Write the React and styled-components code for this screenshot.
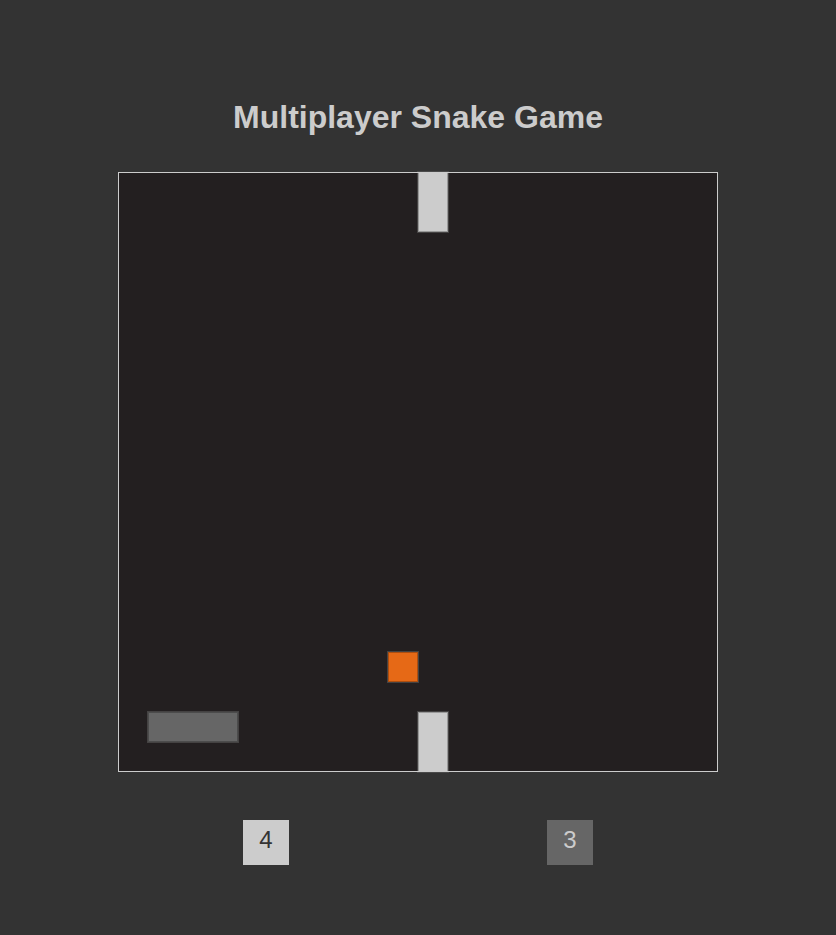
import React from "react";
import styled, { createGlobalStyle } from "styled-components";

const GlobalStyle = createGlobalStyle`
  body {
    margin: 0;
    background-color: #333333;
    font-family: "Liberation Sans", Arial, sans-serif;
  }
`;

const CELL = 30;

const Container = styled.div`
  display: flex;
  flex-direction: column;
  align-items: center;
  padding-top: 99px;
  min-height: 100vh;
  box-sizing: border-box;
`;

const Title = styled.h1`
  margin: 0 0 36px;
  font-size: 32px;
  line-height: 37px;
  font-weight: 700;
  color: #cccccc;
`;

const Board = styled.div`
  display: grid;
  grid-template-columns: repeat(20, ${CELL}px);
  grid-template-rows: repeat(20, ${CELL}px);
  width: 600px;
  height: 600px;
  background-color: #231f20;
  outline: 1px solid #cccccc;
  outline-offset: -1px;
`;

const Cell = styled.div`
  grid-column: ${({ x, w }) => `${x + 1} / span ${w || 1}`};
  grid-row: ${({ y, h }) => `${y + 1} / span ${h || 1}`};
  background-color: ${({ color }) => color};
  box-shadow: inset 0 0 0 1px rgba(0, 0, 0, 0.25),
    0 0 0 1px rgba(90, 90, 90, 0.6);
`;

const Scores = styled.div`
  display: flex;
  justify-content: center;
  gap: 258px;
  margin-top: 48px;
`;

const Score = styled.div`
  width: 46px;
  height: 45px;
  line-height: 40px;
  text-align: center;
  font-size: 24px;
  background-color: ${({ bg }) => bg};
  color: ${({ fg }) => fg};
`;

const snakes = [
  { x: 10, y: 0, h: 2, color: "#cccccc" },
  { x: 10, y: 18, h: 2, color: "#cccccc" },
  { x: 1, y: 18, w: 3, color: "#666666" },
];

const food = { x: 9, y: 16 };

const App = () => {
  return (
    <>
      <GlobalStyle />
      <Container>
        <Title>Multiplayer Snake Game</Title>
        <Board>
          {snakes.map((s, i) => (
            <Cell key={i} x={s.x} y={s.y} w={s.w} h={s.h} color={s.color} />
          ))}
          <Cell x={food.x} y={food.y} color="#e66916" />
        </Board>
        <Scores>
          <Score bg="#cccccc" fg="#333333">4</Score>
          <Score bg="#666666" fg="#cccccc">3</Score>
        </Scores>
      </Container>
    </>
  );
};

export default App;
